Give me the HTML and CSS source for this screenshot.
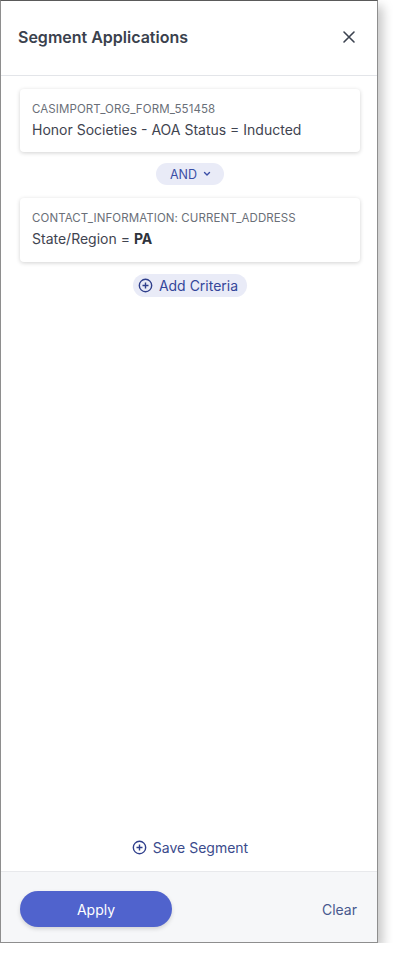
FILE: index.html
```html
<!DOCTYPE html>
<html lang="en">
<head>
  <meta charset="UTF-8">
  <meta name="viewport" content="width=device-width, initial-scale=1.0">
  <title>Segment Applications</title>
  <link rel="stylesheet" href="styles.css">
</head>
<body>
  <div class="panel">
    <!-- Header -->
    <div class="panel-header">
      <h2 class="panel-title">Segment Applications</h2>
      <button class="close-btn" aria-label="Close">
        <svg width="14" height="14" viewBox="0 0 14 14"><path d="M2 2L12 12M12 2L2 12" stroke="#3c4350" stroke-width="1.6" stroke-linecap="round"/></svg>
      </button>
    </div>

    <!-- Criteria -->
    <div class="panel-body">
      <div class="criteria-card">
        <div class="criteria-label">CASIMPORT_ORG_FORM_551458</div>
        <div class="criteria-value">Honor Societies - AOA Status = Inducted</div>
      </div>

      <button class="pill and-pill">AND
        <svg width="8" height="6" viewBox="0 0 8 6"><path d="M1.5 1.5L4 4L6.5 1.5" fill="none" stroke="#3b4ea6" stroke-width="1.4" stroke-linecap="round" stroke-linejoin="round"/></svg>
      </button>

      <div class="criteria-card card-tall">
        <div class="criteria-label">CONTACT_INFORMATION: CURRENT_ADDRESS</div>
        <div class="criteria-value">State/Region = <strong>PA</strong></div>
      </div>

      <button class="pill add-pill">
        <svg width="15" height="15" viewBox="0 0 16 16"><circle cx="8" cy="8" r="6.6" fill="none" stroke="#2f3f8c" stroke-width="1.5"/><path d="M8 4.8V11.2M4.8 8H11.2" stroke="#2f3f8c" stroke-width="1.5"/></svg>
        Add Criteria
      </button>

      <div class="spacer"></div>

      <button class="link-btn save-btn">
        <svg width="15" height="15" viewBox="0 0 16 16"><circle cx="8" cy="8" r="6.6" fill="none" stroke="#2f3f8c" stroke-width="1.5"/><path d="M8 4.8V11.2M4.8 8H11.2" stroke="#2f3f8c" stroke-width="1.5"/></svg>
        Save Segment
      </button>
    </div>

    <!-- Footer -->
    <div class="panel-footer">
      <button class="apply-btn">Apply</button>
      <button class="link-btn clear-btn">Clear</button>
    </div>
  </div>
</body>
</html>
```

FILE: styles.css
```css
/* General Styling */
body {
  margin: 0;
  font-family: Inter, "Open Sans", Arial, sans-serif;
  background: #fff;
  color: #3f4450;
}

button {
  font-family: inherit;
  border: none;
  background: none;
  cursor: pointer;
  padding: 0;
}

.panel {
  width: 376px;
  height: 941px;
  border: 1px solid #8e8e8e;
  border-top-color: #5a5a5a;
  display: flex;
  flex-direction: column;
  background: #fff;
  box-shadow: 5px 6px 10px rgba(0, 0, 0, 0.22);
}

/* Header */
.panel-header {
  height: 74px;
  border-bottom: 1px solid #e3e5e9;
  display: flex;
  align-items: center;
  justify-content: space-between;
  padding: 0 18px 0 17px;
}

.panel-title {
  margin: 0 0 2px;
  font-size: 16px;
  font-weight: 600;
  color: #3a414d;
}

.close-btn {
  width: 20px;
  height: 20px;
  display: flex;
  align-items: center;
  justify-content: center;
  margin-top: -2px;
}

/* Body */
.panel-body {
  flex: 1;
  display: flex;
  flex-direction: column;
  align-items: center;
  padding: 13px 17px 0 19px;
}

.criteria-card {
  align-self: stretch;
  background: #fff;
  border-radius: 4px;
  box-shadow: 0 1px 4px rgba(0, 0, 0, 0.18);
  padding: 13px 12px 12px;
}

.card-tall {
  padding-bottom: 13px;
}

.criteria-label {
  font-size: 11.5px;
  line-height: 14px;
  color: #6a6f78;
  letter-spacing: 0.1px;
}

.criteria-value {
  margin-top: 4px;
  font-size: 14px;
  line-height: 20px;
  color: #3f4450;
}

.criteria-value strong {
  font-weight: 700;
  color: #2e333c;
}

.pill {
  display: flex;
  align-items: center;
  gap: 6px;
  background: #e9ebf7;
  color: #3b4ea6;
  border-radius: 12px;
  font-size: 12.5px;
}

.and-pill {
  height: 22px;
  padding: 0 13px 0 14px;
  margin: 11px 0 13px;
}

.add-pill {
  height: 23px;
  padding: 0 9px 0 5px;
  margin-top: 12px;
  font-size: 14px;
  color: #34469a;
}

.spacer {
  flex: 1;
}

.link-btn {
  display: flex;
  align-items: center;
  gap: 6px;
  font-size: 14px;
  color: #3b4b8c;
}

.save-btn {
  margin-bottom: 12px;
  height: 24px;
}

/* Footer */
.panel-footer {
  height: 71px;
  background: #f6f7f9;
  border-top: 1px solid #e8e9ec;
  display: flex;
  align-items: center;
  justify-content: space-between;
  padding: 4px 20px 0 19px;
  box-sizing: border-box;
}

.apply-btn {
  width: 152px;
  height: 36px;
  border-radius: 18px;
  background: #5063cd;
  color: #fff;
  font-size: 14px;
  box-shadow: 0 2px 4px rgba(0, 0, 0, 0.15);
}

.clear-btn {
  font-size: 14px;
  color: #48598e;
}
```
